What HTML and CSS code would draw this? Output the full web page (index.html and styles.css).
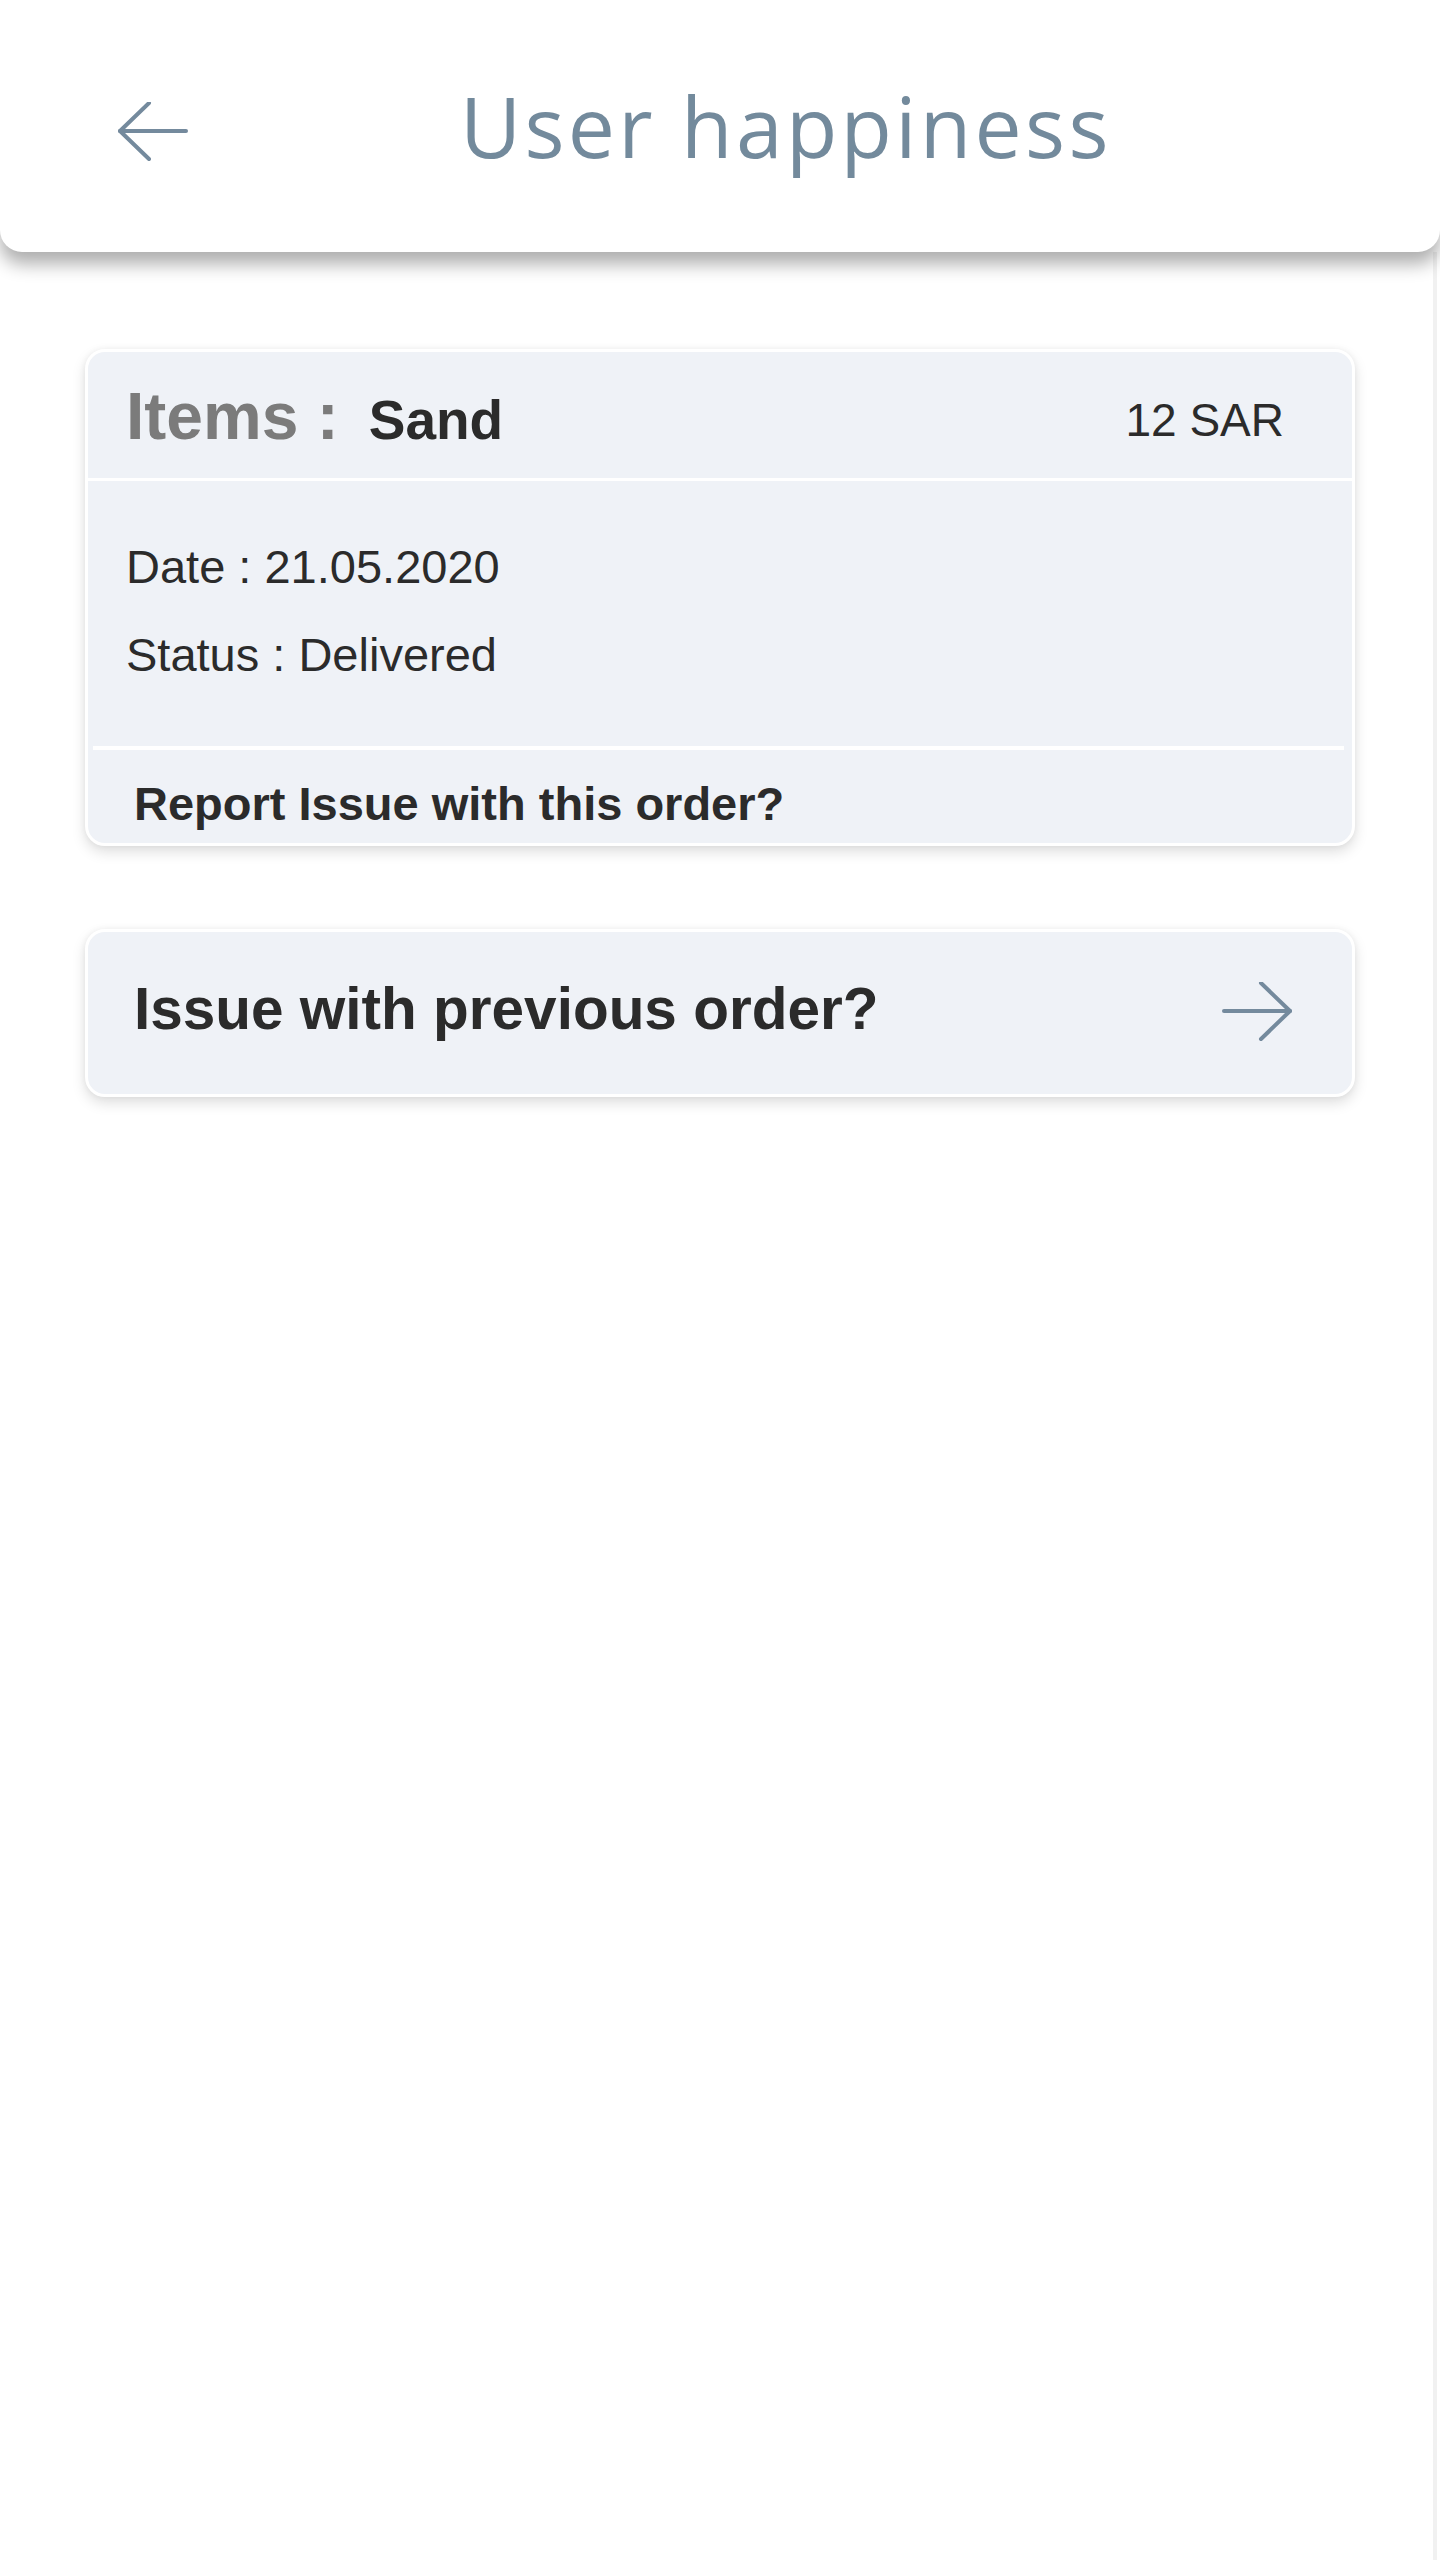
FILE: index.html
```html
<!DOCTYPE html>
<html lang="en">
<head>
<meta charset="utf-8">
<title>User happiness</title>
<link rel="stylesheet" href="styles.css">
</head>
<body>
  <header class="topbar">
    <button class="back" aria-label="Back">
      <svg width="70" height="60" viewBox="0 0 70 60" fill="none" stroke="#748a9d" stroke-width="4" stroke-linecap="round" stroke-linejoin="round">
        <path d="M2 29 H68"/>
        <path d="M31 1 L2 29 L31 57"/>
      </svg>
    </button>
    <h1 class="title">User happiness</h1>
  </header>

  <div class="page">
    <main class="content">
      <section class="order-card">
        <div class="order-head">
          <span class="items-label">Items :</span>
          <span class="items-name">Sand</span>
          <span class="price">12 SAR</span>
        </div>
        <div class="order-body">
          <p class="info-line">Date : 21.05.2020</p>
          <p class="info-line">Status : Delivered</p>
        </div>
        <div class="order-foot">Report Issue with this order?</div>
      </section>

      <section class="link-card">
        <span class="link-text">Issue with previous order?</span>
        <svg class="link-arrow" width="70" height="60" viewBox="0 0 70 60" fill="none" stroke="#748a9d" stroke-width="4" stroke-linecap="round" stroke-linejoin="round">
          <path d="M2 29 H68"/>
          <path d="M39 1 L68 29 L39 57"/>
        </svg>
      </section>
    </main>
    <div class="track"></div>
  </div>
</body>
</html>
```

FILE: styles.css
```css
* { box-sizing: border-box; }

html, body {
  margin: 0;
  padding: 0;
  background: #ffffff;
  font-family: "Liberation Sans", Arial, sans-serif;
  color: #2b2b2b;
}

.topbar {
  position: relative;
  z-index: 2;
  height: 252px;
  background: #ffffff;
  border-radius: 0 0 22px 22px;
  box-shadow: 0 12px 18px rgba(0, 0, 0, 0.32);
  display: flex;
  align-items: center;
  padding-left: 118px;
}

.back {
  border: 0;
  background: none;
  padding: 0;
  margin: 12px 0 0 0;
  display: flex;
  width: 70px;
  height: 60px;
}

.title {
  margin: 0 0 0 272px;
  font-family: "Open Sans", "Noto Sans", sans-serif;
  font-weight: 400;
  font-size: 84px;
  line-height: 1;
  color: #738a9c;
  letter-spacing: 3.3px;
}

.page {
  display: flex;
  min-height: calc(100vh - 252px);
}

.content {
  flex: 1;
  padding: 97px 78px 0 85px;
}

.track {
  width: 4px;
  margin-right: 3px;
  background: #f1f1f1;
}

.order-card {
  width: 1270px;
  background: #eff2f7;
  border: 3px solid #ffffff;
  border-radius: 20px;
  box-shadow: 0 6px 14px rgba(0, 0, 0, 0.13), 0 0 6px rgba(0, 0, 0, 0.05);
}

.order-head {
  height: 129px;
  display: flex;
  align-items: baseline;
  padding: 31px 68px 0 38px;
  border-bottom: 3px solid #ffffff;
}

.items-label {
  font-weight: 700;
  font-size: 66px;
  line-height: 1;
  color: #7b7b7b;
}

.items-name {
  margin-left: 30px;
  font-weight: 700;
  font-size: 55px;
  line-height: 1;
  color: #2b2b2b;
}

.price {
  margin-left: auto;
  font-size: 46px;
  line-height: 1;
  color: #2b2b2b;
  position: relative;
  top: -3px;
}

.order-body {
  padding: 42px 38px 47px;
}

.info-line {
  margin: 0;
  font-size: 47px;
  line-height: 88px;
  color: #2b2b2b;
}

.order-foot {
  margin: 0 8px 0 5px;
  border-top: 4px solid #ffffff;
  padding: 13px 0 0 41px;
  height: 97px;
  font-weight: 700;
  font-size: 47px;
  line-height: 82px;
  color: #2b2b2b;
}

.link-card {
  width: 1270px;
  height: 168px;
  margin-top: 83px;
  background: #eff2f7;
  border: 3px solid #ffffff;
  border-radius: 20px;
  box-shadow: 0 6px 14px rgba(0, 0, 0, 0.13), 0 0 6px rgba(0, 0, 0, 0.05);
  display: flex;
  align-items: center;
  justify-content: space-between;
  padding: 0 60px 0 46px;
}

.link-text {
  font-weight: 700;
  font-size: 58.5px;
  line-height: 1;
  color: #2b2b2b;
  margin-top: -8px;
}

.link-arrow {
  display: block;
  margin-top: -2px;
}
```
